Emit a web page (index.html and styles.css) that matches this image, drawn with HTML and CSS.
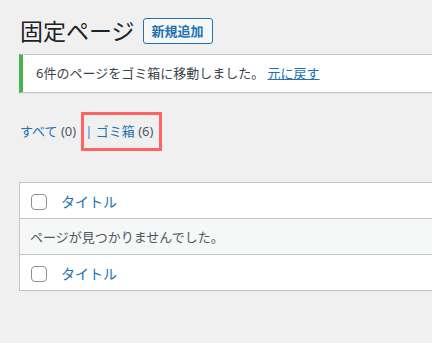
FILE: index.html
```html
<!DOCTYPE html>
<html lang="ja">
<head>
    <meta charset="UTF-8">
    <meta name="viewport" content="width=device-width, initial-scale=1.0">
    <title>固定ページ</title>
    <link rel="stylesheet" href="styles.css">
</head>
<body>
    <div class="wrap">
        <div class="page-head">
            <h1>固定ページ</h1>
            <a href="#" class="add-new">新規追加</a>
        </div>

        <div class="notice">
            <p>6件のページをゴミ箱に移動しました。 <a href="#">元に戻す</a></p>
        </div>

        <ul class="filters">
            <li><a href="#">すべて <span class="count">(0)</span></a></li>
            <li class="current"><span class="sep">|</span> <a href="#">ゴミ箱 <span class="count">(6)</span></a></li>
        </ul>

        <div class="list">
            <div class="row head">
                <span class="check"></span>
                <a href="#" class="col-title">タイトル</a>
            </div>
            <div class="row empty">ページが見つかりませんでした。</div>
            <div class="row foot">
                <span class="check"></span>
                <a href="#" class="col-title">タイトル</a>
            </div>
        </div>
    </div>
</body>
</html>
```

FILE: styles.css
```css
body {
    margin: 0;
    padding: 0;
    background-color: #f0f0f1;
    font-family: "Noto Sans", "Noto Sans CJK JP", sans-serif;
    color: #3c434a;
    overflow: hidden;
}
a {
    color: #2271b1;
    text-decoration: none;
}
.wrap {
    padding: 18px 0 0 19px;
    width: 420px;
}
.page-head {
    display: flex;
    align-items: center;
    gap: 8px;
    height: 26px;
}
h1 {
    margin: 0;
    padding-left: 1px;
    font-size: 23px;
    font-weight: 400;
    line-height: 26px;
    color: #1d2327;
}
.add-new {
    display: block;
    height: 24px;
    padding: 0 8px;
    border: 1px solid #2271b1;
    border-radius: 3px;
    background-color: #f6f7f7;
    font-size: 13px;
    font-weight: 700;
    line-height: 24px;
}
.notice {
    margin-top: 10px;
    background: white;
    border: 1px solid #c3c4c7;
    border-left: 4px solid #46b450;
    box-shadow: 0 1px 1px rgba(0, 0, 0, 0.04);
}
.notice p {
    margin: 0;
    padding: 9px 13px;
    font-size: 13px;
    line-height: 19px;
}
.notice a {
    text-decoration: underline;
}
.filters {
    display: flex;
    align-items: center;
    margin: 19px 0 0;
    padding: 0;
    list-style: none;
    font-size: 13px;
    line-height: 19px;
}
.filters li:first-child {
    margin-left: 1px;
    margin-right: 5px;
}
.filters .current {
    border: 3px solid #ff6464;
    padding: 7px 6px 7px 1px;
}
.sep {
    color: #3582c4;
}
.count {
    color: #50575e;
}
.list {
    margin-top: 31px;
    background: white;
    border: 1px solid #c3c4c7;
}
.row {
    display: flex;
    align-items: center;
    height: 35px;
    padding-left: 11px;
}
.row.head, .row.empty {
    border-bottom: 1px solid #c3c4c7;
}
.row.empty {
    padding-left: 10px;
    background-color: #f6f7f7;
    font-size: 13px;
    color: #50575e;
}
.check {
    box-sizing: border-box;
    width: 16px;
    height: 16px;
    margin-top: 2px;
    border: 1px solid #8c8f94;
    border-radius: 4px;
    background: white;
}
.col-title {
    margin-left: 14px;
    font-size: 14px;
}
```
